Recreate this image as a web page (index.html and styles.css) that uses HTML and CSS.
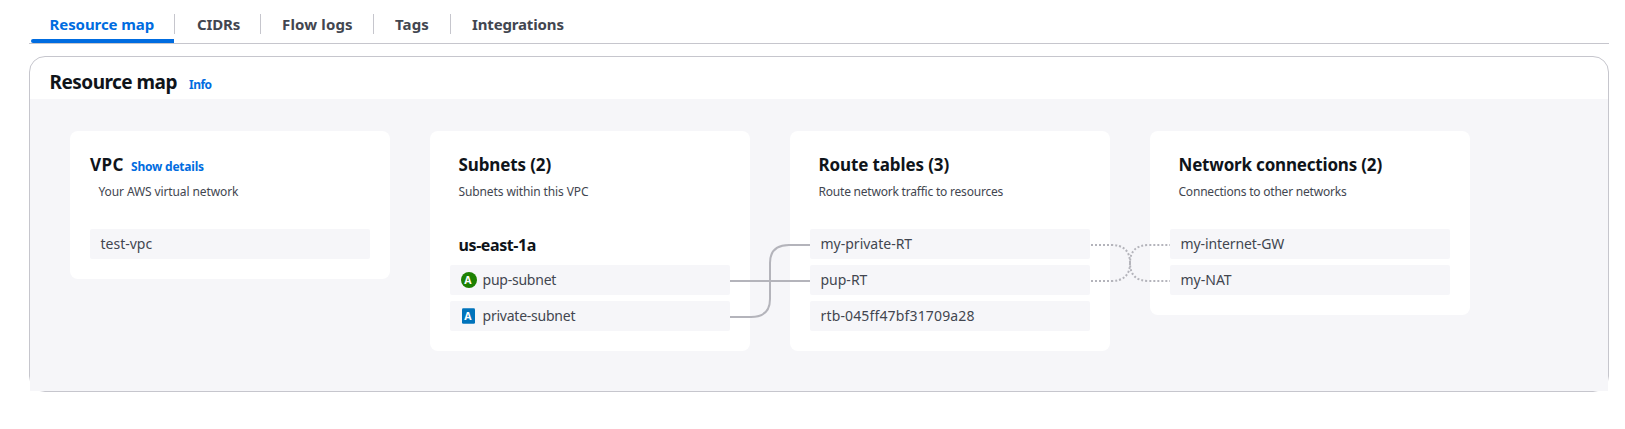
FILE: index.html
```html
<!DOCTYPE html>
<html lang="en">
<head>
<meta charset="utf-8">
<title>Resource map</title>
<link rel="stylesheet" href="styles.css">
</head>
<body>
<nav class="tabs">
  <a class="tab tab-active"><span class="tab-label">Resource map</span></a>
  <a class="tab tab-cidrs"><span class="tab-label">CIDRs</span></a>
  <a class="tab tab-flow"><span class="tab-label">Flow logs</span></a>
  <a class="tab tab-tags"><span class="tab-label">Tags</span></a>
  <a class="tab tab-int"><span class="tab-label">Integrations</span></a>
</nav>
<main class="panel">
  <header class="panel-header"><h1 class="panel-title">Resource map</h1><a class="info">Info</a></header>
  <div class="board">
    <section class="card card-vpc">
      <div class="heading"><h2 class="card-title vpc">VPC</h2><a class="details">Show details</a></div>
      <p class="desc">Your AWS virtual network</p>
      <ul class="rows"><li class="row"><span>test-vpc</span></li></ul>
    </section>
    <section class="card">
      <div class="heading"><h2 class="card-title">Subnets (2)</h2></div>
      <p class="desc">Subnets within this VPC</p>
      <h3 class="zone">us-east-1a</h3>
      <ul class="rows rows-zone">
        <li class="row"><svg class="icon" viewBox="0 0 16 16"><circle cx="8" cy="8" r="8" fill="#1d8102"/><text class="icon-letter" x="7" y="12">A</text></svg><span class="subnet-name">pup-subnet</span></li>
        <li class="row"><svg class="icon" viewBox="0 0 16 16"><rect x="1" y="0.3" width="13" height="15.4" rx="1.3" fill="#0073bb"/><text class="icon-letter" x="7" y="12">A</text></svg><span class="subnet-name">private-subnet</span></li>
      </ul>
    </section>
    <section class="card">
      <div class="heading"><h2 class="card-title">Route tables (3)</h2></div>
      <p class="desc desc-tight">Route network traffic to resources</p>
      <ul class="rows">
        <li class="row"><span>my-private-RT</span></li>
        <li class="row"><span>pup-RT</span></li>
        <li class="row"><span class="route-id">rtb-045ff47bf31709a28</span></li>
      </ul>
    </section>
    <section class="card">
      <div class="heading"><h2 class="card-title title-net">Network connections (2)</h2></div>
      <p class="desc desc-tight">Connections to other networks</p>
      <ul class="rows">
        <li class="row"><span class="name-tight">my-internet-GW</span></li>
        <li class="row"><span>my-NAT</span></li>
      </ul>
    </section>
    <svg class="links" viewBox="730 235 440 92">
      <path d="M730 281H810M730 317H751Q770 317 770 299V263Q770 245 789 245H810"/>
      <path class="dotted" d="M1090 245H1111Q1130 245 1130 263Q1130 281 1149 281H1170"/>
      <path class="dotted" d="M1090 281H1111Q1130 281 1130 263Q1130 245 1149 245H1170"/>
    </svg>
  </div>
</main>
</body>
</html>
```
FILE: styles.css
```css
* { box-sizing: border-box; }
body {
  margin: 0;
  padding: 0 16px 0 29px;
  background: #fff;
  color: #424650;
  font-family: "Noto Sans", "Open Sans", sans-serif;
}
h1, h2, h3, p, ul { margin: 0; padding: 0; }
ul { list-style: none; }
.tabs { display: flex; height: 44px; padding: 14px 0 0 2px; border-bottom: 1px solid #c6c6cd; }
.tab { height: 20px; border-right: 1px solid #c6c6cd; padding-left: 22px; white-space: nowrap; }
.tab-label { display: block; font-size: 15px; line-height: 20px; font-weight: 700; letter-spacing: -0.15px; }
.tab-active { position: relative; width: 143px; height: 29px; padding-left: 18.5px; border-right: 0; color: #006ce0; }
.tab-active .tab-label { letter-spacing: -0.08px; }
.tab-active::after { content: ""; position: absolute; left: 0; bottom: 0; width: 143px; height: 4px; border-radius: 2px 0 0 2px; background: #006ce0; }
.tab-cidrs { width: 87px; border-left: 1px solid #c6c6cd; }
.tab-flow { width: 113px; padding-left: 21px; }
.tab-flow .tab-label { letter-spacing: 0.15px; }
.tab-tags { width: 77px; padding-left: 21px; }
.tab-tags .tab-label { letter-spacing: 0.1px; }
.tab-int { border-right: 0; padding-left: 21px; }
.panel { height: 336px; margin-top: 12px; border: 1px solid #c6c6cd; border-radius: 16px; }
.panel-header { display: flex; align-items: baseline; height: 42px; padding: 11px 0 0 19.5px; }
.panel-title { width: 139.5px; font-size: 19px; line-height: 28px; font-weight: 700; letter-spacing: -0.52px; color: #0f141a; white-space: nowrap; }
.info, .details { font-size: 12px; line-height: 20px; font-weight: 700; letter-spacing: -0.21px; color: #006ce0; white-space: nowrap; }
.info { letter-spacing: -0.5px; }
.board { position: relative; display: flex; align-items: flex-start; gap: 40px; height: 292px; padding: 32px 0 0 40px; background: #f6f6f9; }
.card { width: 320px; padding: 20px; border-radius: 8px; background: #fff; }
.heading { display: flex; align-items: baseline; height: 31px; padding-left: 8.5px; }
.card-title { font-size: 17px; line-height: 28px; font-weight: 700; letter-spacing: -0.12px; color: #0f141a; white-space: nowrap; }
.title-net { letter-spacing: -0.19px; }
.card-vpc .heading { padding-left: 0; }
.vpc { width: 41px; letter-spacing: 0.4px; }
.desc { padding-left: 8.5px; font-size: 12px; line-height: 20px; letter-spacing: -0.11px; white-space: nowrap; }
.desc-tight { letter-spacing: -0.21px; }
.rows { display: grid; gap: 6px; margin-top: 27px; }
.rows-zone { margin-top: 0; }
.zone { height: 63px; padding: 33px 0 0 8.5px; font-size: 16px; line-height: 20px; font-weight: 700; letter-spacing: -0.4px; color: #0f141a; }
.row { display: flex; align-items: center; height: 30px; padding-left: 10.5px; border-radius: 2px; background: #f6f6f9; font-size: 14px; line-height: 20px; white-space: nowrap; }
.subnet-name { letter-spacing: -0.23px; }
.name-tight { letter-spacing: -0.1px; }
.route-id { letter-spacing: 0.15px; }
.icon { width: 16px; height: 16px; margin-right: 6px; }
.icon-letter { font-size: 10.5px; font-weight: 700; text-anchor: middle; fill: #fff; }
.links { position: absolute; left: 700px; top: 136px; width: 440px; height: 92px; fill: none; stroke: #b4b4bb; stroke-width: 2; }
.dotted { stroke-dasharray: 2 2; stroke-dashoffset: -1; }
```
